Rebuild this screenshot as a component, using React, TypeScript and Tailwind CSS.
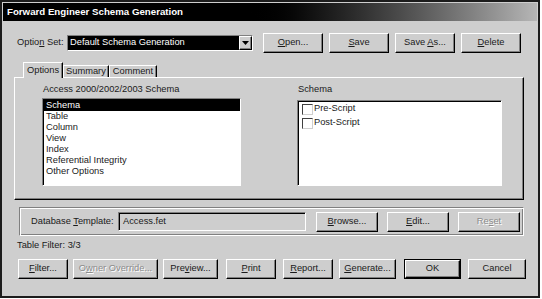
import type { ReactNode } from 'react';

const raised =
  'border border-t-white border-l-white border-r-black border-b-black shadow-[inset_-1px_-1px_0_#808080]';
const sunken =
  'border border-t-[#808080] border-l-[#808080] border-r-white border-b-white shadow-[inset_1px_1px_0_#000]';

const Btn = ({
  w,
  children,
  disabled = false,
  isDefault = false,
}: {
  w: string;
  children: ReactNode;
  disabled?: boolean;
  isDefault?: boolean;
}) => {
  const inner = (
    <div
      className={`${raised} h-full w-full flex items-center justify-center whitespace-nowrap ${
        disabled ? 'text-[#8c8c8c] [text-shadow:1px_1px_0_#fff]' : 'text-[#1a1a1a]'
      }`}
    >
      <span>{children}</span>
    </div>
  );
  if (isDefault) {
    return <div className={`${w} h-[20px] shrink-0 border border-black`}>{inner}</div>;
  }
  return <div className={`${w} h-[20px] shrink-0`}>{inner}</div>;
};

const U = ({ children }: { children: ReactNode }) => <span className="underline">{children}</span>;

const CheckItem = ({ label }: { label: string }) => (
  <div className="flex items-center h-[14px] pl-[3px]">
    <span className="w-[11px] h-[11px] bg-white border border-t-[#404040] border-l-[#404040] border-r-[#cfcfcf] border-b-[#cfcfcf] mr-[1px]" />
    <span>{label}</span>
  </div>
);

const schemaItems = ['Schema', 'Table', 'Column', 'View', 'Index', 'Referential Integrity', 'Other Options'];

export default function App() {
  return (
    <div className="w-[542px] h-[299px] bg-white font-[family-name:Liberation_Sans,Arial,sans-serif] text-[9.3px] text-[#1a1a1a] leading-none whitespace-nowrap">
      <div className="w-[540px] h-[298px] bg-[#cecece] border-2 border-[#1c1c1c] p-px flex flex-col">
        {/* Title bar */}
        <div className="h-[18px] bg-linear-to-r from-black from-45% to-[#b6b6b6] flex items-center pl-[4px]">
          <span className="text-white font-bold text-[9.7px]">Forward Engineer Schema Generation</span>
        </div>

        <div className="pl-[11px] flex flex-col">
          {/* Option set row */}
          <div className="mt-[12px] h-[20px] pl-[3px] flex items-center">
            <span className="w-[50px] shrink-0">
              Optio<U>n</U> Set:
            </span>
            <div className={`${sunken} w-[186px] h-[16px] flex items-center bg-white`}>
              <div className="flex-1 h-full bg-black text-white flex items-center pl-[2px]">
                Default Schema Generation
              </div>
              <div className={`${raised} w-[13px] h-full bg-[#cecece] flex items-center justify-center`}>
                <svg width="7" height="4" viewBox="0 0 7 4">
                  <path d="M0 0h7L3.5 4z" fill="#000" />
                </svg>
              </div>
            </div>
            <div className="ml-[10px] flex gap-[6px]">
              <Btn w="w-[60px]">
                <U>O</U>pen...
              </Btn>
              <Btn w="w-[60px]">
                <U>S</U>ave
              </Btn>
              <Btn w="w-[60px]">
                Save <U>A</U>s...
              </Btn>
              <Btn w="w-[60px]">
                <U>D</U>elete
              </Btn>
            </div>
          </div>

          {/* Tabs */}
          <div className="mt-[9px] h-[15px] pl-[9px] flex items-end relative z-10">
            <div className="h-[16px] -mb-px px-[3px] bg-[#cecece] border border-b-0 border-t-white border-l-white border-r-black shadow-[inset_-1px_0_0_#808080] flex items-center">
              Options
            </div>
            <div className="h-[12px] px-[2px] border border-b-0 border-t-white border-l-white border-r-black shadow-[inset_-1px_0_0_#808080] flex items-center">
              Summary
            </div>
            <div className="h-[12px] px-[3px] border border-b-0 border-t-white border-l-white border-r-black shadow-[inset_-1px_0_0_#808080] flex items-center">
              Comment
            </div>
          </div>

          {/* Tab panel */}
          <div className={`${raised} w-[510px] h-[123px] pl-[27px] pt-[6px] flex`}>
            <div className="w-[199px] flex flex-col">
              <span className="pl-[1px] h-[12px] flex items-center">Access 2000/2002/2003 Schema</span>
              <div className={`${sunken} mt-[2px] h-[88px] bg-white pt-[1px] pl-[1px]`}>
                {schemaItems.map((item, i) => (
                  <div
                    key={item}
                    className={`h-[11px] flex items-center pl-[2px] ${i === 0 ? 'bg-black text-white' : ''}`}
                  >
                    {item}
                  </div>
                ))}
              </div>
            </div>
            <div className="ml-[56px] w-[205px] flex flex-col">
              <span className="pl-[1px] h-[12px] flex items-center">Schema</span>
              <div className={`${sunken} mt-[4px] h-[86px] bg-white pt-[1px] pl-[1px]`}>
                <CheckItem label="Pre-Script" />
                <CheckItem label="Post-Script" />
              </div>
            </div>
          </div>

          {/* Database template frame */}
          <div className="mt-[7px] ml-[5px] w-[505px] h-[29px] border border-t-[#808080] border-l-[#808080] border-r-white border-b-white shadow-[inset_1px_1px_0_#fff,inset_-1px_-1px_0_#808080] flex items-center pl-[11px]">
            <span className="w-[87px] shrink-0">
              Database <U>T</U>emplate:
            </span>
            <div className={`${sunken} w-[188px] h-[19px] flex items-center pl-[4px]`}>Access.fet</div>
            <div className="ml-[10px] flex gap-[9px]">
              <Btn w="w-[62px]">
                <U>B</U>rowse...
              </Btn>
              <Btn w="w-[62px]">
                <U>E</U>dit...
              </Btn>
              <Btn w="w-[62px]" disabled>
                Re<U>s</U>et
              </Btn>
            </div>
          </div>

          <div className="mt-[5px] h-[10px] pl-[3px] flex items-center">Table Filter: 3/3</div>

          {/* Bottom buttons */}
          <div className="mt-[8px] pl-[4px] flex">
            <Btn w="w-[50px]">
              <U>F</U>ilter...
            </Btn>
            <div className="w-[5px]" />
            <Btn w="w-[85px]" disabled>
              O<U>w</U>ner Override...
            </Btn>
            <div className="w-[5px]" />
            <Btn w="w-[55px]">
              Pre<U>v</U>iew...
            </Btn>
            <div className="w-[8px]" />
            <Btn w="w-[50px]">
              <U>P</U>rint
            </Btn>
            <div className="w-[7px]" />
            <Btn w="w-[50px]">
              <U>R</U>eport...
            </Btn>
            <div className="w-[6px]" />
            <Btn w="w-[57px]">
              <U>G</U>enerate...
            </Btn>
            <div className="w-[8px]" />
            <Btn w="w-[57px]" isDefault>
              OK
            </Btn>
            <div className="w-[7px]" />
            <Btn w="w-[58px]">Cancel</Btn>
          </div>
        </div>
      </div>
    </div>
  );
}
